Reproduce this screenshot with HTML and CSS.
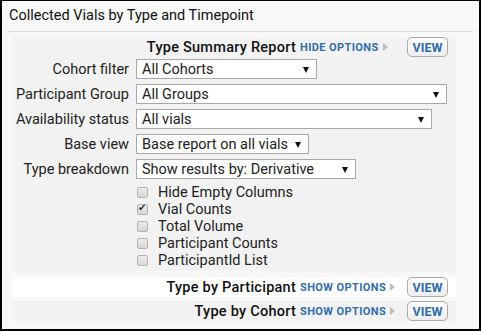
FILE: index.html
```html
<!DOCTYPE html>
<html lang="en">
<head>
    <meta charset="UTF-8">
    <meta name="viewport" content="width=device-width, initial-scale=1.0">
    <title>Collected Vials by Type and Timepoint</title>
    <link rel="stylesheet" href="styles.css">
</head>
<body>
    <div class="webpart">
        <div class="webpart-title">Collected Vials by Type and Timepoint</div>

        <div class="report report-open">
            <div class="report-head">
                <span class="report-name">Type Summary Report</span>
                <a class="toggle" href="#">Hide Options<span class="arrow"></span></a>
                <button class="view-btn">View</button>
            </div>

            <div class="report-form">
                <label>Cohort filter</label>
                <span class="select" style="width: 181px;"><select><option>All Cohorts</option></select></span>

                <label>Participant Group</label>
                <span class="select" style="width: 311px;"><select><option>All Groups</option></select></span>

                <label>Availability status</label>
                <span class="select" style="width: 296px;"><select><option>All vials</option></select></span>

                <label>Base view</label>
                <span class="select" style="width: 173px;"><select><option>Base report on all vials</option></select></span>

                <label>Type breakdown</label>
                <span class="select" style="width: 220px;"><select><option>Show results by: Derivative</option></select></span>
            </div>

            <div class="checks">
                <label class="check"><input type="checkbox">Hide Empty Columns</label>
                <label class="check"><input type="checkbox" checked>Vial Counts</label>
                <label class="check"><input type="checkbox">Total Volume</label>
                <label class="check"><input type="checkbox">Participant Counts</label>
                <label class="check"><input type="checkbox">ParticipantId List</label>
            </div>
        </div>

        <div class="report report-white">
            <div class="report-head">
                <span class="report-name">Type by Participant</span>
                <a class="toggle" href="#">Show Options<span class="arrow"></span></a>
                <button class="view-btn">View</button>
            </div>
        </div>

        <div class="report">
            <div class="report-head">
                <span class="report-name">Type by Cohort</span>
                <a class="toggle" href="#">Show Options<span class="arrow"></span></a>
                <button class="view-btn">View</button>
            </div>
        </div>
    </div>
</body>
</html>
```

FILE: styles.css
```css
html, body {
    margin: 0;
    padding: 0;
}
body {
    font-family: Roboto, 'Liberation Sans', sans-serif;
    font-size: 14.5px;
    color: #222;
    background-color: #fff;
}
.webpart {
    box-sizing: border-box;
    width: 481px;
    height: 331px;
    border: 2px solid #000;
    border-top-width: 1px;
    background-color: #f8f8f8;
}
.webpart-title {
    margin: 0 6px;
    padding: 6px 1px 0;
    height: 24px;
    border-bottom: 1px solid #dedede;
    color: #111;
}
.report {
    margin: 5px 23px 0 10px;
    background-color: #f2f2f2;
}
.report-open {
    padding-bottom: 2px;
}
.report-white {
    margin-top: 6px;
    background-color: #fff;
}
.report-white + .report {
    margin-top: 4px;
}
.report-head {
    display: flex;
    align-items: center;
    height: 20px;
}
.report-name {
    flex: 1;
    text-align: right;
    font-weight: 500;
    letter-spacing: 0.25px;
    color: #111;
}
.toggle {
    display: flex;
    align-items: center;
    width: 107px;
    margin-left: 4px;
    font-size: 11px;
    font-weight: 700;
    letter-spacing: 0.4px;
    text-transform: uppercase;
    text-decoration: none;
    color: #2f6ead;
}
.arrow {
    display: inline-block;
    margin-left: 4px;
    border-top: 4px solid transparent;
    border-bottom: 4px solid transparent;
    border-left: 5px solid #bdbdbd;
}
.view-btn {
    box-sizing: border-box;
    width: 41px;
    height: 20px;
    margin-right: 8px;
    padding: 0;
    border: 1px solid #ababab;
    border-radius: 5px;
    background: linear-gradient(#ffffff, #ececec);
    font-family: Roboto, 'Liberation Sans', sans-serif;
    font-size: 12.5px;
    font-weight: 700;
    text-transform: uppercase;
    color: #2f6ead;
}
.report-form {
    display: grid;
    grid-template-columns: 117px auto;
    column-gap: 7px;
    row-gap: 5px;
    align-items: center;
    margin-top: 2px;
}
.report-form label {
    text-align: right;
}
.select {
    position: relative;
    display: block;
}
.select::after {
    content: "";
    position: absolute;
    right: 8px;
    top: 8px;
    border-left: 3px solid transparent;
    border-right: 3px solid transparent;
    border-top: 6px solid #111;
    pointer-events: none;
}
.select select {
    box-sizing: border-box;
    width: 100%;
    height: 20px;
    margin: 0;
    padding: 0 0 0 5px;
    border: 1px solid #a9a9a9;
    border-radius: 0;
    background-color: #fff;
    font-family: Roboto, 'Liberation Sans', sans-serif;
    font-size: 14.5px;
    color: #222;
    appearance: none;
    -webkit-appearance: none;
}
.checks {
    margin-top: 5px;
    padding-left: 125px;
}
.check {
    display: flex;
    align-items: center;
    height: 17px;
}
.check input {
    position: relative;
    box-sizing: border-box;
    width: 11px;
    height: 11px;
    margin: 0 10px 0 0;
    border: 1px solid #b4b4b4;
    border-radius: 2px;
    background: linear-gradient(#ececec, #d6d6d6);
    appearance: none;
    -webkit-appearance: none;
}
.check input:checked::after {
    content: "\2714";
    position: absolute;
    left: 0;
    top: -3px;
    font-size: 10px;
    color: #333;
}
```
